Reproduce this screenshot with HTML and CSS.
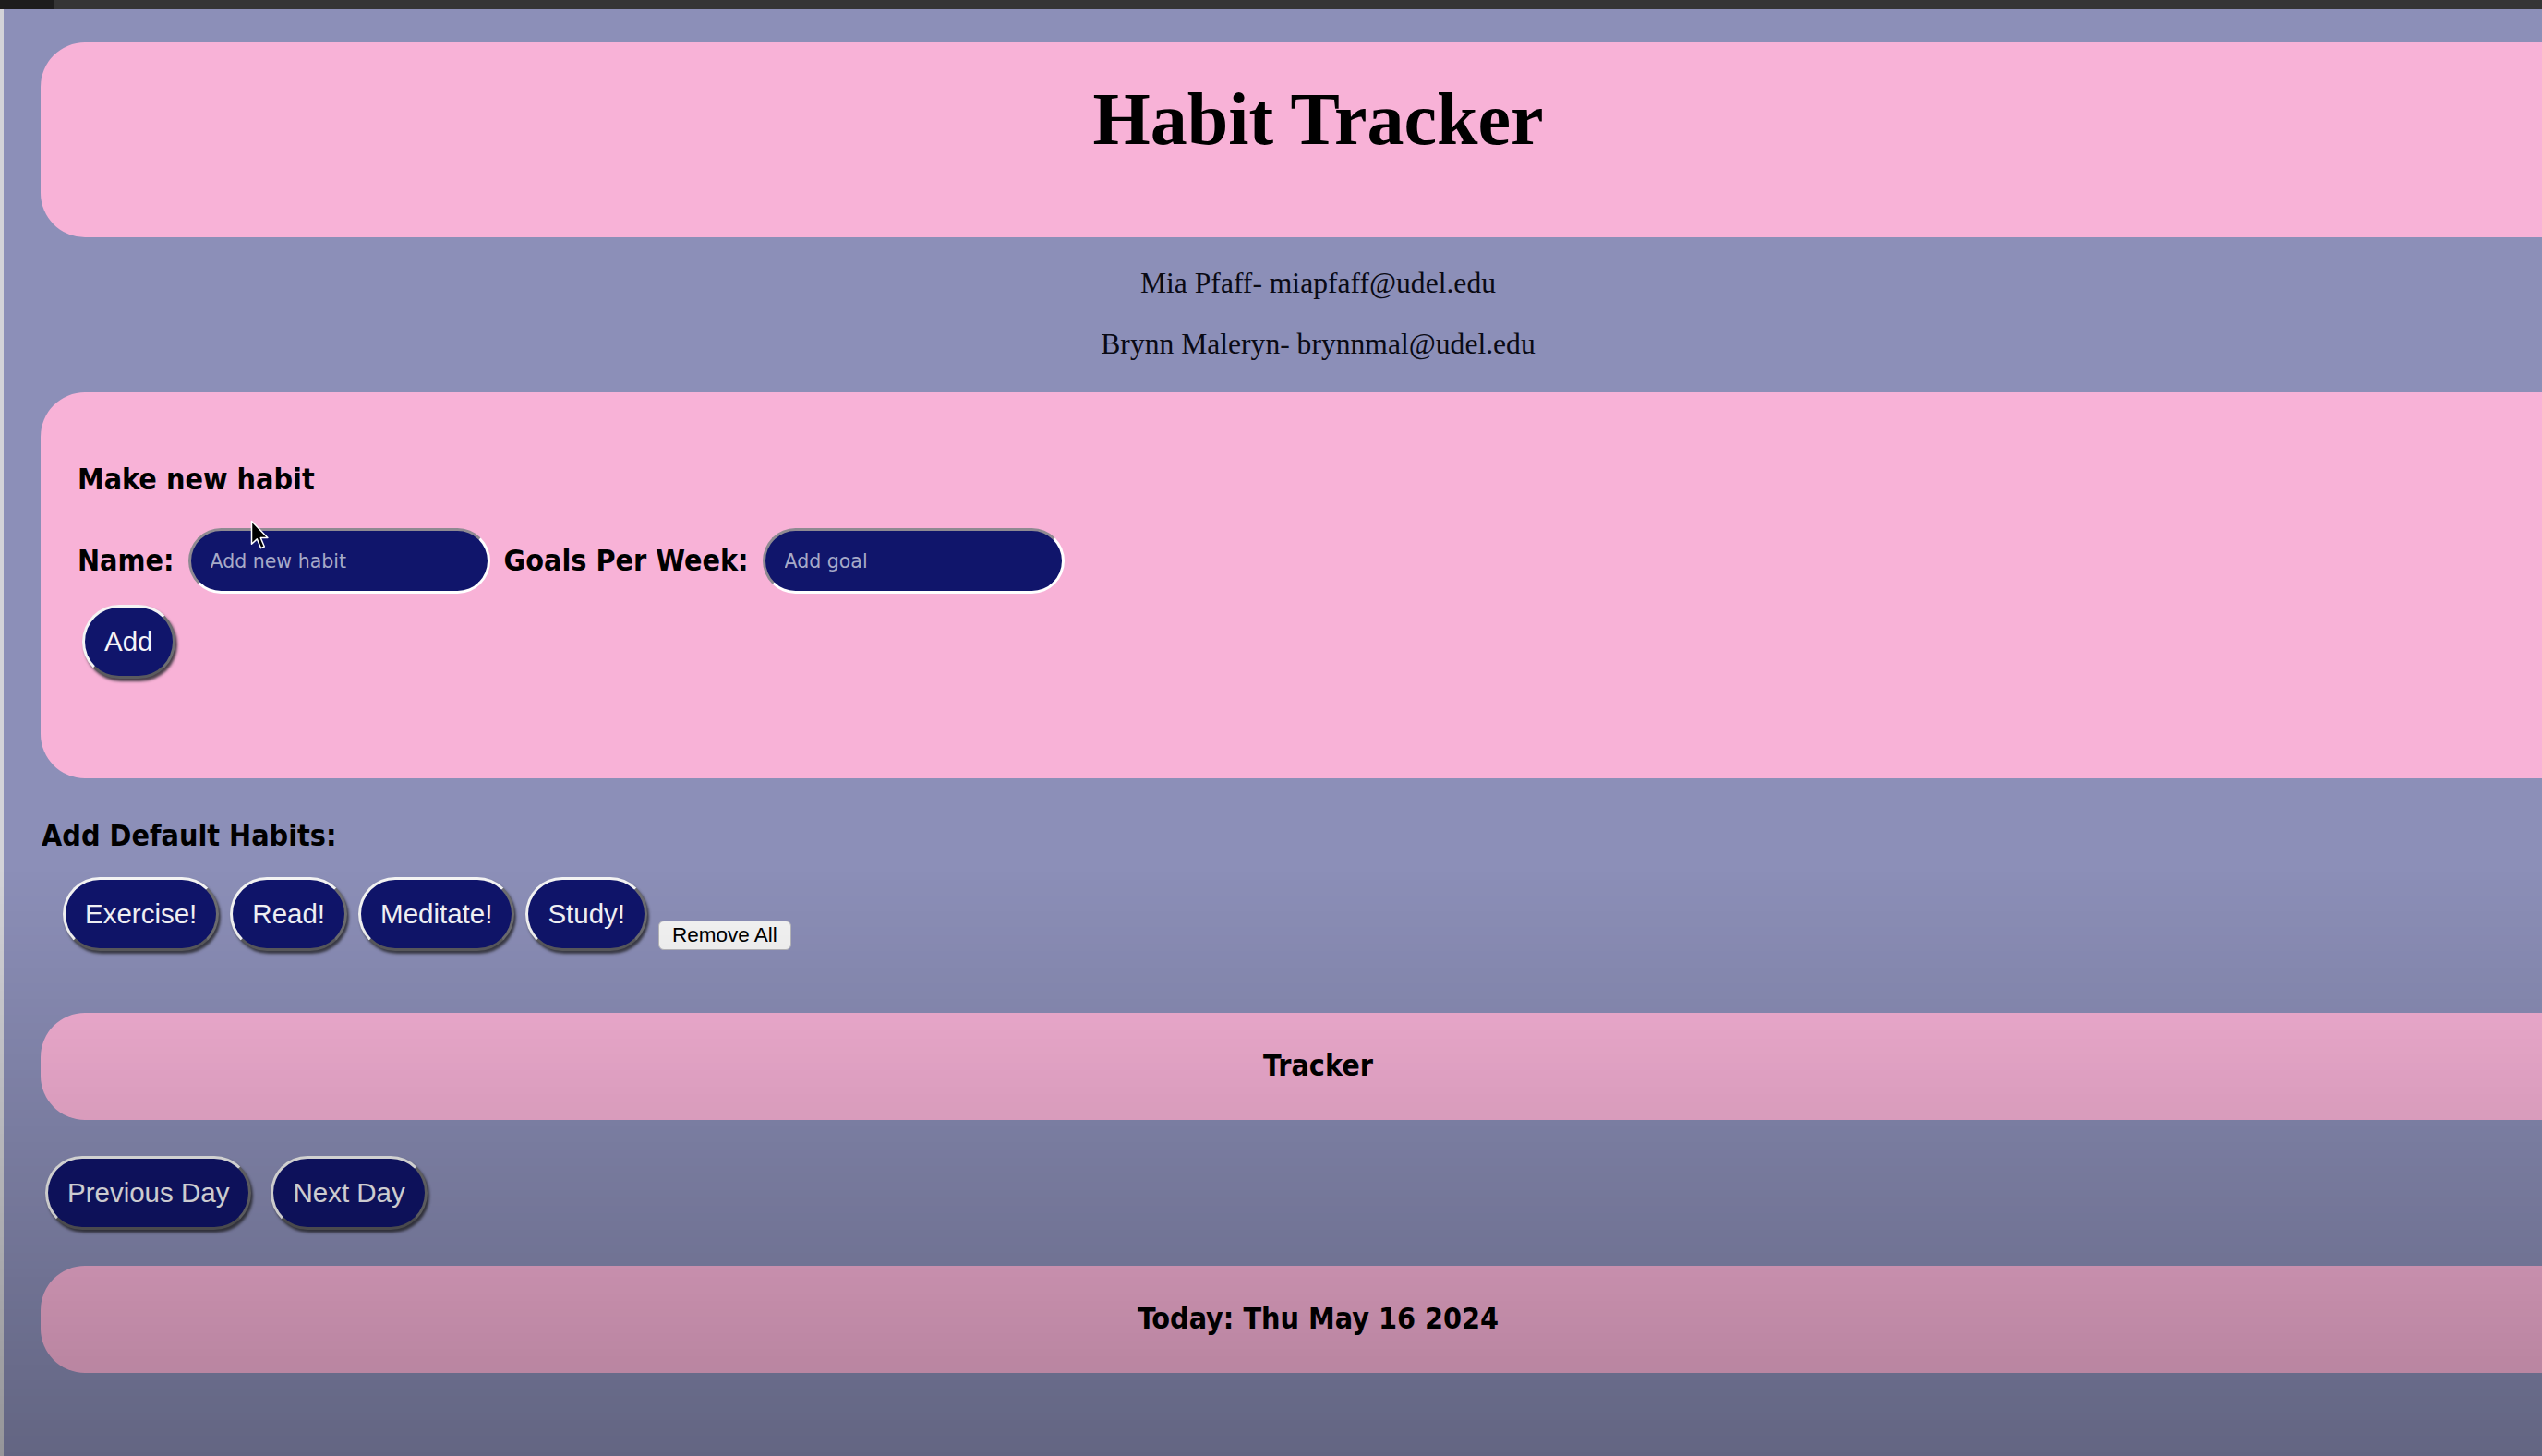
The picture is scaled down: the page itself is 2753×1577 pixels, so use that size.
FILE: index.html
```html
<!DOCTYPE html>
<html lang="en">
<head>
<meta charset="utf-8">
<title>Habit Tracker</title>
<link rel="stylesheet" href="styles.css">
</head>
<body>
<div class="topbar"><span class="topbar-left"></span></div>
<div class="screen">
  <div class="page">
    <header class="banner">
      <h1 class="title">Habit Tracker</h1>
    </header>
    <div class="authors">
      <p>Mia Pfaff- miapfaff@udel.edu</p>
      <p>Brynn Maleryn- brynnmal@udel.edu</p>
    </div>
    <section class="card form-card">
      <h2 class="label">Make new habit</h2>
      <div class="field-row">
        <label class="label" for="habit-name">Name:</label>
        <input class="text-input" id="habit-name" type="text" placeholder="Add new habit">
        <label class="label" for="habit-goal">Goals Per Week:</label>
        <input class="text-input" id="habit-goal" type="text" placeholder="Add goal">
      </div>
      <button class="pill add-btn">Add</button>
    </section>
    <h2 class="label defaults-title">Add Default Habits:</h2>
    <div class="defaults">
      <button class="pill">Exercise!</button>
      <button class="pill">Read!</button>
      <button class="pill">Meditate!</button>
      <button class="pill">Study!</button>
      <button class="remove-btn">Remove All</button>
    </div>
    <div class="card bar"><span class="label">Tracker</span></div>
    <div class="day-nav">
      <button class="pill">Previous Day</button>
      <button class="pill">Next Day</button>
    </div>
    <div class="card bar"><span class="label">Today: Thu May 16 2024</span></div>
  </div>
</div>
<div class="vignette"></div>
<svg class="cursor" width="21" height="33" viewBox="0 0 14 22" aria-hidden="true">
  <path d="M1 1 L1 17.5 L4.9 13.9 L7.7 20.4 L10.2 19.3 L7.5 13 L12.6 13 Z" fill="#000" stroke="#fff" stroke-width="1" stroke-linejoin="round"/>
</svg>
</body>
</html>
```

FILE: styles.css
```css
html, body {
  margin: 0;
  padding: 0;
  overflow: hidden;
  background: #8c8fb8;
}

body {
  width: 2753px;
  height: 1577px;
  position: relative;
}

.topbar {
  height: 10px;
  background: #353535;
  display: flex;
}

.topbar-left {
  width: 58px;
  background: #1d1d1d;
}

.screen {
  border-left: 4px solid #d3d3d8;
  min-height: 1567px;
  box-sizing: border-box;
}

.page {
  width: 2847px;
  box-sizing: border-box;
  padding: 36px 40px 0 40px;
}

.banner {
  background: #f8b2d7;
  border-radius: 48px;
  padding: 43px 0 88px 0;
}

.title {
  margin: 0;
  text-align: center;
  font-family: "Liberation Serif", "Times New Roman", serif;
  font-weight: bold;
  font-size: 80px;
  line-height: 80px;
  color: #000;
}

.authors {
  margin-top: 32px;
  display: flex;
  flex-direction: column;
  gap: 30px;
}

.authors p {
  margin: 0;
  text-align: center;
  font-family: "Liberation Serif", "Times New Roman", serif;
  font-size: 31.6px;
  line-height: 36px;
  color: #0a0a14;
}

.card {
  background: #f8b2d7;
  border-radius: 48px;
}

.label {
  margin: 0;
  font-family: "DejaVu Sans Condensed", "DejaVu Sans", Verdana, sans-serif;
  font-stretch: condensed;
  font-weight: bold;
  font-size: 32px;
  line-height: 33px;
  color: #000;
}

.form-card {
  margin-top: 34px;
  padding: 78px 41px 108px 40px;
}

.field-row {
  margin-top: 36px;
  display: flex;
  align-items: center;
  gap: 15px;
}

.text-input {
  width: 327px;
  height: 71px;
  box-sizing: border-box;
  border-radius: 36px;
  border-style: solid;
  border-width: 3px;
  border-color: #8f8a92 #ffffff #ffffff #8f8a92;
  background: #10156b;
  padding: 0 21px;
  font-family: "DejaVu Sans", Verdana, sans-serif;
  font-size: 20.5px;
  color: #ffffff;
  outline: none;
}

.text-input::placeholder {
  color: #a7aac8;
}

.pill {
  font-family: "Liberation Sans", Arial, sans-serif;
  font-size: 29.5px;
  line-height: 34px;
  color: #f4f4f8;
  background: #10156b;
  padding: 20px 21px;
  border-style: solid;
  border-width: 3px;
  border-color: #f4f4f4 #6e6e72 #5a5a5e #f4f4f4;
  border-radius: 40px;
  box-shadow: 2px 3px 3px rgba(45, 45, 50, 0.85);
  margin: 0;
}

.add-btn {
  margin-top: 12px;
  margin-left: 5px;
}

.defaults-title {
  margin-top: 46px;
  padding-left: 1px;
}

.defaults {
  margin-top: 28px;
  padding-left: 24px;
  display: flex;
  align-items: flex-end;
  gap: 12px;
}

.remove-btn {
  font-family: "Liberation Sans", Arial, sans-serif;
  font-size: 22.5px;
  line-height: 24px;
  color: #000;
  background: #f6f6f6;
  border: 1px solid #b8b8bc;
  border-radius: 6px;
  padding: 3px 14px;
  margin: 0 0 1px 0;
}

.bar {
  text-align: center;
  padding: 41px 0 42px 0;
}

.defaults + .bar {
  margin-top: 67px;
}

.day-nav {
  margin-top: 39px;
  padding-left: 5px;
  display: flex;
  gap: 21px;
}

.day-nav + .bar {
  margin-top: 39px;
}

.vignette {
  position: fixed;
  inset: 0;
  pointer-events: none;
  background: linear-gradient(180deg, rgba(0, 0, 0, 0) 59.6%, rgba(0, 0, 0, 0.29) 100%);
}

.cursor {
  position: absolute;
  left: 271px;
  top: 563px;
}
```
